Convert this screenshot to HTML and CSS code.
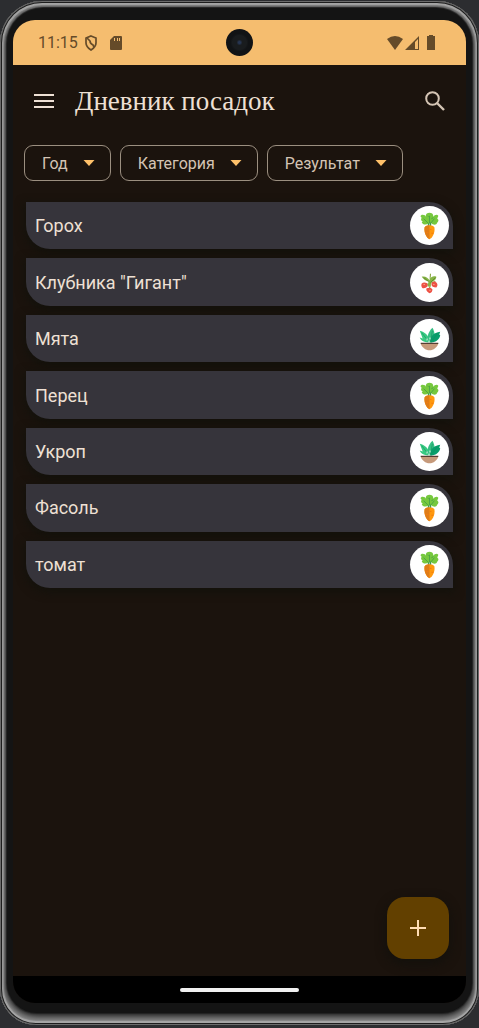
FILE: index.html
```html
<!DOCTYPE html>
<html lang="ru">
<head>
<meta charset="utf-8">
<meta name="viewport" content="width=device-width, initial-scale=1">
<title>Дневник посадок</title>
<link rel="stylesheet" href="styles.css">
</head>
<body>
<svg class="symbols" aria-hidden="true">
  <symbol id="arrow" viewBox="0 0 12 6"><path d="M.5 0h11L6 6z" fill="#ffc16a"/></symbol>
  <symbol id="carrot" viewBox="0 0 40 40">
    <path d="M19 13v9M21 14v8" stroke="#429b54" stroke-width="1.5"/>
    <path d="M19 18c-3 2-6 1-7-1l1-1c-2-1-2-3-1-4-2-1-1-3 1-3 2 0 3 1 3 2 0-3 2-4 4-4s4 1 4 4c1-2 4-3 5-1 0 1-1 2-1 3 2 1 1 3 0 4-1 3-4 3-7 0z" fill="#76c83e"/>
    <path d="M20 18v-8m-1 8-5-5m7 5 4-5m-6-2-1-1m4 3 2-1" fill="none" stroke="#439d46" stroke-width=".8"/>
    <path d="M15 22c1-3 9-3 10 0 1 5-2 11-5 12-3-1-6-7-5-12z" fill="#ff980e"/>
    <path d="M15 22c1-2 3-2 5-2v14c-3-1-6-7-5-12z" fill="#df7c18"/>
    <path d="M20 24h2m-6 3h3m3 1h2" stroke="#f27b10"/>
  </symbol>
  <symbol id="berries" viewBox="0 0 40 40">
    <path d="M20 26c2-5 0-9 1-15M20 22l-6-1m6 0 6-2" fill="none" stroke="#7b9c2c"/>
    <path d="M19 19c-3-1-5-2-7-5 3-1 7 1 8 4 1-4 4-5 7-4 0 3-3 5-6 6v4h-3z" fill="#86b545"/>
    <path d="m14 15 5 4m7-4-5 5" stroke="#55772b" stroke-width=".7"/>
    <path d="M12 21c2-2 6-1 6 1 1 2-2 4-5 4-1-1-2-3-1-5zm10 1c0-3 3-4 5-2s1 4 0 5c-3 0-5-1-5-3zm-5 4c2-1 5-1 6 1 0 2-1 4-3 4-2-1-4-3-3-5z" fill="#ed5145"/>
    <path d="M14 22h1m9 0h1m-5 6h1" stroke="#ffd1aa"/>
  </symbol>
  <symbol id="herb" viewBox="0 0 40 40">
    <path d="M19 24c-5 0-8-2-9-5l3 1-3-8c5 1 9 5 10 9z" fill="#37c981"/>
    <path d="M20 24c-3-5-2-10 3-15 3 5 3 10-1 15z" fill="#35bf83"/>
    <path d="M21 24c0-7 3-10 10-11l-1 3 1 1c-1 4-4 7-9 7z" fill="#079e6b"/>
    <path d="m12 14 7 9m2 0 2-11m-1 11 6-8" fill="none" stroke="#158c5e" stroke-width=".6"/>
    <path d="M17 20h1v2h-1zm3-1h1v2h-1zm-1 3h1v2h-1z" fill="#eafff4"/>
    <path d="M11 25h18c-1 4-5 7-9 7s-8-3-9-7z" fill="#c69a7b"/>
    <path d="M11 25h18" stroke="#563e33" stroke-width="1.3"/>
  </symbol>
</svg>
<div class="device">
  <div class="bezel">
    <div class="screen">
      <div class="status">
        <span class="clock">11:15</span>
        <svg class="status-icon shield" width="14" height="16" viewBox="0 0 14 16" fill="none" stroke="currentColor" stroke-width="1.7"><path d="m7 1 5 2v5c0 3-2 5-5 7-3-2-5-4-5-7V3z"/><path d="m3 3 3 3c0 2 1 3 3 4l1 2"/></svg>
        <svg class="status-icon" width="12" height="14" viewBox="0 0 12 14"><path fill="currentColor" fill-rule="evenodd" d="M4 0h7q1 0 1 1v12q0 1-1 1H1q-1 0-1-1V4zm0 2v3h1V2zm3 0v3h1V2zm2 0v3h1V2z"/></svg>
        <svg class="status-icon wifi" width="16" height="14" viewBox="0 0 16 14"><path fill="currentColor" d="M0 3q8-6 16 0L8 14z"/></svg>
        <svg class="status-icon signal" width="14" height="14" viewBox="0 0 14 14"><path fill="currentColor" fill-rule="evenodd" d="M14 0v14H0zM10 6v7h3V3z"/></svg>
        <svg class="status-icon" width="8" height="15" viewBox="0 0 8 15"><path fill="currentColor" d="M2 0h4v1h2v14H0V1h2z"/></svg>
        <span class="camera"></span>
      </div>
      <header class="toolbar">
        <button class="icon-button" type="button" aria-label="Меню"><svg width="20" height="14" viewBox="0 0 20 14"><path d="M0 1h20M0 7h20M0 13h20" stroke="currentColor" stroke-width="2"/></svg></button>
        <h1>Дневник посадок</h1>
        <button class="icon-button search" type="button" aria-label="Поиск"><svg width="20" height="20" viewBox="0 0 20 20" fill="none" stroke="currentColor" stroke-width="2"><circle cx="7.5" cy="7.5" r="6.3"/><path d="m12 12 7 7" stroke-width="2.4"/></svg></button>
      </header>
      <div class="filters">
        <button class="filter" type="button">Год<svg width="12" height="6"><use href="#arrow"/></svg></button>
        <button class="filter" type="button">Категория<svg width="12" height="6"><use href="#arrow"/></svg></button>
        <button class="filter" type="button">Результат<svg width="12" height="6"><use href="#arrow"/></svg></button>
      </div>
      <main>
        <ul class="plants">
          <li class="plant"><span>Горох</span><svg class="avatar"><use href="#carrot"/></svg></li>
          <li class="plant"><span>Клубника "Гигант″</span><svg class="avatar"><use href="#berries"/></svg></li>
          <li class="plant"><span>Мята</span><svg class="avatar"><use href="#herb"/></svg></li>
          <li class="plant"><span>Перец</span><svg class="avatar"><use href="#carrot"/></svg></li>
          <li class="plant"><span>Укроп</span><svg class="avatar"><use href="#herb"/></svg></li>
          <li class="plant"><span>Фасоль</span><svg class="avatar"><use href="#carrot"/></svg></li>
          <li class="plant"><span>томат</span><svg class="avatar"><use href="#carrot"/></svg></li>
        </ul>
      </main>
      <button class="add" type="button" aria-label="Добавить"><svg width="16" height="16" viewBox="0 0 16 16"><path d="M8 0v16M0 8h16" stroke="currentColor" stroke-width="2"/></svg></button>
      <div class="navigation"><span class="handle"></span></div>
    </div>
  </div>
</div>
</body>
</html>
```

FILE: styles.css
```css
* { box-sizing: border-box; }
body {
  margin: 0;
  min-height: 100vh;
  padding: 1px 0 3px;
  display: flex;
  background: #2c2d30;
  color: #eee0d4;
  font-family: Roboto, "Noto Sans", sans-serif;
}
button { font: inherit; color: inherit; margin: 0; padding: 0; border: 0; background: none; cursor: pointer; }
svg { display: block; flex-shrink: 0; }
.symbols { position: absolute; width: 0; height: 0; }
.device {
  flex: 1;
  display: flex;
  padding: 7px 7px 12px;
  border-radius: 42px 42px 36px 36px;
  background: #808080;
  box-shadow: inset 0 0 0 1px #6c6c6c, inset 0 0 0 2px #1d1d1d, inset 0 0 0 4px #a6a6a6, inset 0 0 1px 5px #8a8a8a;
}
.bezel {
  flex: 1;
  display: flex;
  padding: 12px 6px 10px;
  border-radius: 36px 36px 30px 30px;
  background: #141414;
  box-shadow: 0 0 1px 1px #222, 0 2px 4px 2px #333;
}
.screen {
  flex: 1;
  min-width: 0;
  display: flex;
  flex-direction: column;
  overflow: hidden;
  border-radius: 22px;
  background: #1b130d;
}
.status {
  position: relative;
  display: flex;
  align-items: center;
  height: 45px;
  padding: 0 31px 0 25px;
  background: #f5bd6f;
  color: #654b29;
}
.clock { font-size: 16px; }
.shield { margin: 0 12px 0 6px; }
.wifi { margin-left: auto; }
.signal { margin: 0 8px 0 2px; }
.camera {
  position: absolute;
  top: 9px;
  left: 50%;
  width: 27px;
  height: 27px;
  margin-left: -14px;
  border-radius: 50%;
  background: radial-gradient(circle, #263551 0 1px, #191c1e 3px 7px, #111315 9px);
}
.toolbar {
  display: flex;
  align-items: center;
  height: 72px;
  padding: 0 19px;
}
.icon-button { display: flex; align-items: center; justify-content: center; width: 24px; height: 40px; }
h1 { margin: 0 auto 0 19px; font: 400 27px "Liberation Serif", serif; }
.search { color: #d4c4b4; }
.filters { display: flex; gap: 9px; padding: 8px 11px 21px; }
.filter {
  display: flex;
  align-items: center;
  gap: 15px;
  height: 36px;
  padding: 0 15px 0 17px;
  border: 1px solid #9b8f80;
  border-radius: 9px;
  color: #d4c4b4;
  font-size: 16px;
}
main { flex: 1; padding: 0 13px; }
.plants { display: grid; gap: 9px; margin: 0; padding: 0; list-style: none; }
.plant {
  display: flex;
  align-items: center;
  justify-content: space-between;
  aspect-ratio: 9 / 1;
  padding: 0 4px 0 9px;
  border-radius: 0 24px 0 24px;
  background: #36343b;
  box-shadow: 0 3px 8px 2px #14120c;
  font-size: 18px;
}
.avatar { width: 39px; height: 39px; border-radius: 50%; background: #fff; }
.add {
  display: flex;
  align-items: center;
  justify-content: center;
  align-self: flex-end;
  width: 62px;
  height: 62px;
  margin: 0 17px 17px;
  border-radius: 18px;
  background: #624000;
  color: #ffddb4;
  box-shadow: 0 4px 10px 2px #14110c;
}
.navigation { display: flex; align-items: center; justify-content: center; height: 27px; background: #000; }
.handle { width: 119px; height: 4px; border-radius: 2px; background: #f0f0f0; }
```
